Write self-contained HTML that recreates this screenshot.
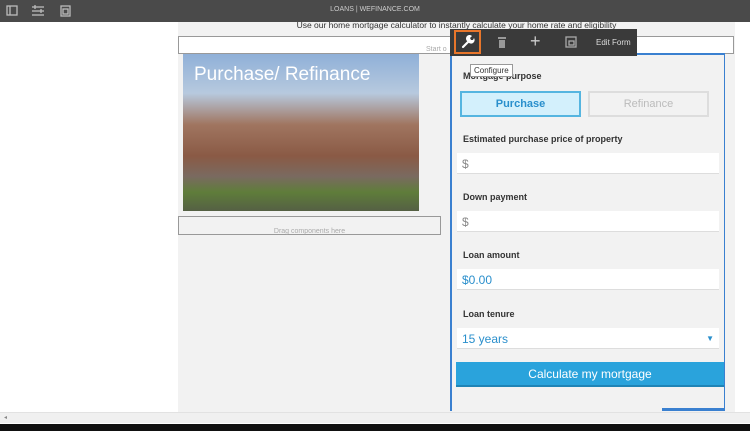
<!DOCTYPE html>
<html><head><style>
*{margin:0;padding:0;box-sizing:border-box}
body{width:750px;height:431px;overflow:hidden;background:#fff;font-family:"Liberation Sans",Arial,sans-serif;position:relative}
.a{position:absolute}
.lbl{font-size:9px;color:#333;font-weight:bold;left:463px}
.inp{left:457px;width:262px;height:21px;background:#fff;border-bottom:1px solid #ddd;font-size:12px;color:#888;padding:4px 5px}
</style></head><body>
<div class="a" style="left:0;top:0;width:750px;height:22px;background:#4a4a4a"></div>
<svg class="a" style="left:6px;top:4px" width="70" height="14" fill="none" stroke="#bbb" stroke-width="1.3">
<rect x="1" y="2" width="10" height="9"/><line x1="4" y1="2" x2="4" y2="11"/>
<line x1="26" y1="3" x2="38" y2="3"/><line x1="26" y1="7" x2="38" y2="7"/><line x1="26" y1="11" x2="38" y2="11"/><line x1="29" y1="1" x2="29" y2="5"/><line x1="35" y1="5" x2="35" y2="9"/>
<rect x="55" y="2" width="9" height="10"/><rect x="57" y="5" width="5" height="5"/></svg>
<div class="a" style="left:0;width:750px;top:6px;text-align:center;font-size:7px;color:#ccc">LOANS | WEFINANCE.COM</div>
<div class="a" style="left:178px;top:22px;width:557px;height:390px;background:#f2f2f2"></div>
<div class="a" style="left:178px;top:20px;width:557px;text-align:center;font-size:8.5px;color:#333">Use our home mortgage calculator to instantly calculate your home rate and eligibility</div>
<div class="a" style="left:178px;top:36px;width:556px;height:18px;border:1px solid #999;background:#fff"></div>
<div class="a" style="left:426px;top:46px;font-size:7px;color:#aaa">Start o</div>
<div class="a" style="left:183px;top:54px;width:236px;height:157px;background:linear-gradient(180deg,#8fb0d8 0%,#b7c9de 25%,#a07560 45%,#8a5a45 65%,#7a6a60 78%,#5f7d3a 88%,#556044 100%)"></div>
<div class="a" style="left:194px;top:64px;font-size:19px;color:#fff">Purchase/ Refinance</div>
<div class="a" style="left:178px;top:216px;width:263px;height:19px;border:1px solid #999;background:#f2f2f2"></div>
<div class="a" style="left:178px;top:228px;width:263px;text-align:center;font-size:7px;color:#aaa">Drag components here</div>
<div class="a" style="left:450px;top:53px;width:275px;height:358px;border:2px solid #3a80d0;border-bottom:none;border-right-width:1px"></div>
<div class="a" style="left:662px;top:408px;width:63px;height:3px;background:#3a80d0"></div>
<div class="a" style="left:450px;top:29px;width:187px;height:27px;background:#3a3a3a"></div>
<div class="a" style="left:454px;top:30px;width:27px;height:24px;border:2px solid #e8762b"></div>
<svg class="a" style="left:461px;top:35px" width="14" height="14"><path d="M2 12 L7 7" stroke="#fff" stroke-width="2.2" stroke-linecap="round"/><path d="M6 6 a3.5 3.5 0 0 1 5 -5 l-2 2 l1 2 l2 0 l1 -2 a3.5 3.5 0 0 1 -6 4z" fill="#fff"/></svg>
<svg class="a" style="left:496px;top:36px" width="12" height="12" fill="#999"><rect x="2" y="1" width="8" height="2"/><rect x="3" y="4" width="6" height="8"/></svg>
<div class="a" style="left:530px;top:31px;font-size:18px;color:#ccc">+</div>
<svg class="a" style="left:565px;top:36px" width="12" height="12" fill="none" stroke="#aaa" stroke-width="1.3"><rect x="1" y="1" width="10" height="10"/><rect x="4" y="5" width="5" height="4"/></svg>
<div class="a" style="left:596px;top:38px;font-size:8px;color:#ddd">Edit Form</div>
<div class="a" style="left:463px;top:71px;font-size:9px;color:#333;font-weight:bold">Mortgage purpose</div>
<div class="a" style="left:470px;top:64px;background:#fff;border:1px solid #999;font-size:8px;padding:1px 3px;color:#333">Configure</div>
<div class="a" style="left:460px;top:91px;width:121px;height:26px;background:#d3f0fc;border:2px solid #55b5e0;text-align:center;font-size:11px;line-height:22px;color:#2a8fcc;font-weight:bold">Purchase</div>
<div class="a" style="left:588px;top:91px;width:121px;height:26px;background:#f2f2f2;border:2px solid #ddd;text-align:center;font-size:11px;line-height:22px;color:#bbb">Refinance</div>
<div class="a lbl" style="top:134px">Estimated purchase price of property</div>
<div class="a inp" style="top:153px">$</div>
<div class="a lbl" style="top:192px">Down payment</div>
<div class="a inp" style="top:211px">$</div>
<div class="a lbl" style="top:250px">Loan amount</div>
<div class="a inp" style="top:269px;color:#2a8fcc">$0.00</div>
<div class="a lbl" style="top:309px">Loan tenure</div>
<div class="a inp" style="top:328px;color:#2a8fcc">15 years<span style="float:right;font-size:8px;margin-top:2px">▼</span></div>
<div class="a" style="left:456px;top:362px;width:268px;height:25px;background:#2aa3dc;color:#fff;font-size:12px;text-align:center;line-height:25px;border-bottom:2px solid #1f84b6">Calculate my mortgage</div>
<div class="a" style="left:0;top:412px;width:750px;height:11px;background:#f0f0f0;border-top:1px solid #e2e2e2"></div>
<div class="a" style="left:4px;top:414px;font-size:6px;color:#888">◂</div>
<div class="a" style="left:0;top:424px;width:750px;height:7px;background:#111"></div>
</body></html>
